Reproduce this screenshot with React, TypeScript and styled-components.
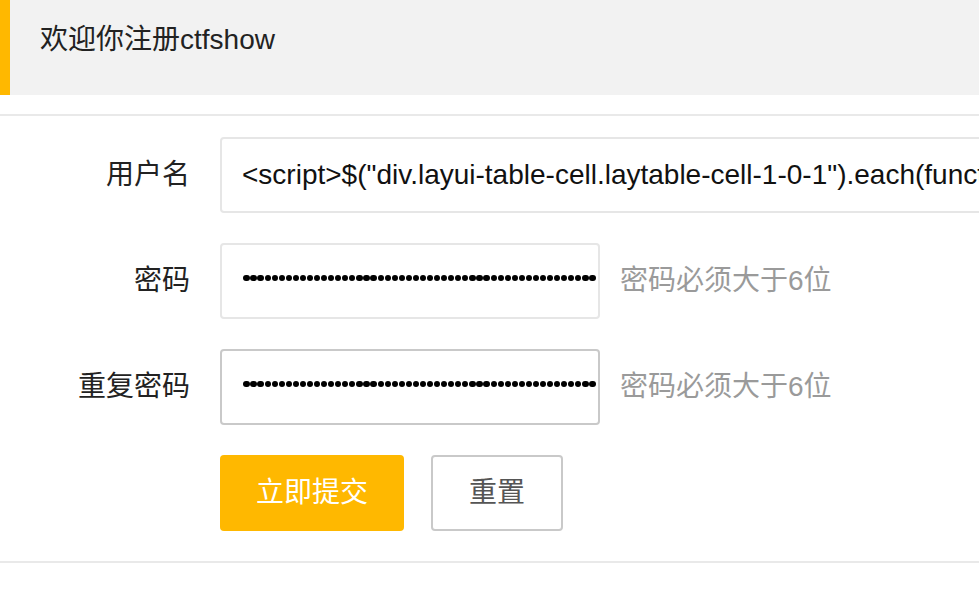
import React from 'react';
import styled, { createGlobalStyle } from 'styled-components';

const GlobalStyle = createGlobalStyle`
  html, body {
    margin: 0;
    padding: 0;
    overflow: hidden;
    background: #fff;
  }
  body {
    font-family: "Liberation Sans", "Noto Sans CJK SC", sans-serif;
    font-size: 28px;
    color: #222;
  }
`;

interface FieldProps {
  label: string;
  children: React.ReactNode;
}

const Field = ({ label, children }: FieldProps): JSX.Element => (
  <FormItem>
    <Label>{label}</Label>
    {children}
  </FormItem>
);

const dots = Array.from({ length: 50 }, (_, i) => i);

const PasswordBox = ({ hover }: { hover?: boolean }): JSX.Element => (
  <InlineInput $hover={hover}>
    <DotMask>
      {dots.map((i) => (
        <Dot key={i} />
      ))}
    </DotMask>
  </InlineInput>
);

const App = (): JSX.Element => {
  return (
    <Page>
      <GlobalStyle />
      <Quote>欢迎你注册ctfshow</Quote>
      <Rule />
      <Form>
        <Field label="用户名">
          <BlockInput>
            {'<script>$("div.layui-table-cell.laytable-cell-1-0-1").each(function(){ $(this).find("a").attr("href") })</script>'}
          </BlockInput>
        </Field>
        <Field label="密码">
          <PasswordBox />
          <Aux>密码必须大于6位</Aux>
        </Field>
        <Field label="重复密码">
          <PasswordBox hover />
          <Aux>密码必须大于6位</Aux>
        </Field>
        <ButtonRow>
          <SubmitButton>立即提交</SubmitButton>
          <ResetButton>重置</ResetButton>
        </ButtonRow>
      </Form>
      <Rule />
    </Page>
  );
};

const Page = styled.div`
  width: 1040px;
`;

const Quote = styled.div`
  box-sizing: border-box;
  height: 95px;
  padding: 18px 30px 0;
  line-height: 44px;
  background: #f2f2f2;
  border-left: 10px solid #ffb800;
  color: #222;
`;

const Rule = styled.div`
  height: 2px;
  background: #e9e9e9;
  margin-top: 19px;
`;

const Form = styled.div`
  padding-top: 21px;
`;

const FormItem = styled.div`
  display: flex;
  align-items: center;
  margin-bottom: 30px;
`;

const Label = styled.div`
  box-sizing: border-box;
  flex: 0 0 220px;
  padding: 18px 30px;
  line-height: 40px;
  text-align: right;
  color: #222;
`;

const BlockInput = styled.div`
  box-sizing: border-box;
  flex: 1;
  height: 76px;
  padding-left: 20px;
  line-height: 72px;
  border: 2px solid #e6e6e6;
  border-radius: 4px;
  white-space: nowrap;
  overflow: hidden;
  color: #111;
`;

const InlineInput = styled.div<{ $hover?: boolean }>`
  box-sizing: border-box;
  width: 380px;
  height: 76px;
  padding: 0 2px 0 20px;
  border: 2px solid ${(p) => (p.$hover ? '#c9c9c9' : '#e6e6e6')};
  border-radius: 4px;
  display: flex;
  align-items: center;
`;

const DotMask = styled.div`
  flex: 1;
  overflow: hidden;
  display: flex;
  align-items: center;
  justify-content: flex-end;
  height: 10px;
  margin-top: -6px;
`;

const Dot = styled.span`
  flex: 0 0 7.07px;
  min-width: 0;
  display: flex;
  justify-content: center;

  &::before {
    content: '';
    flex: none;
    width: 6.2px;
    height: 6.2px;
    border-radius: 50%;
    background: #000;
  }
`;

const Aux = styled.div`
  padding: 18px 0 18px 20px;
  line-height: 40px;
  color: #9a9a9a;
`;

const ButtonRow = styled.div`
  display: flex;
  padding-left: 220px;
  margin-bottom: 30px;
`;

const SubmitButton = styled.button`
  height: 76px;
  padding: 0 36px;
  border: none;
  border-radius: 4px;
  background: #ffb800;
  color: #fff;
  font: inherit;
  line-height: 76px;
`;

const ResetButton = styled.button`
  height: 76px;
  margin-left: 27px;
  padding: 0 36px;
  border: 2px solid #c9c9c9;
  border-radius: 4px;
  background: #fff;
  color: #555;
  font: inherit;
  line-height: 72px;
`;

export default App;
